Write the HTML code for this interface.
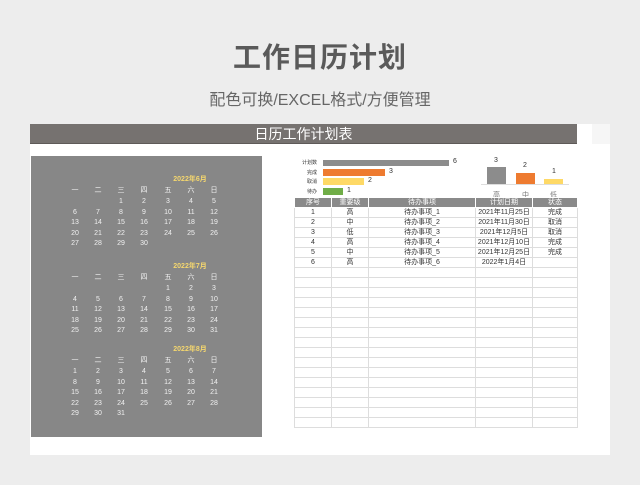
<!DOCTYPE html>
<html><head><meta charset="utf-8"><style>
*{margin:0;padding:0;box-sizing:border-box}
body{width:640px;height:485px;background:#ededed;position:relative;overflow:hidden;font-family:"Liberation Sans","Noto Sans CJK SC",sans-serif}
.a{position:absolute}
.t1{left:0;width:640px;top:36px;text-align:center;font-size:28px;font-weight:bold;color:#5a5a5a;letter-spacing:1px}
.t2{left:0;width:640px;top:86px;text-align:center;font-size:16px;color:#666}
.panel{left:30px;top:124px;width:580px;height:331px;background:#fff}
.bar{left:30px;top:124px;width:547px;height:20px;background:#767270;border-bottom:1px solid #5e5a58;color:#fff;text-align:center;font-size:14px;line-height:20px}
.side{left:592px;top:124px;width:18px;height:20px;background:#f6f6f6}
.cal{left:31px;top:156px;width:231px;height:281px;background:#878787}
.c{position:absolute;width:22px;text-align:center;font-size:7px;color:#f0f0f0;line-height:8px}
.h{position:absolute;width:60px;text-align:center;font-size:7px;color:#f5d76e;font-weight:bold}
table{position:absolute;left:294px;top:197px;border-collapse:collapse;font-size:7px;color:#333}
td{border:1px solid #ddd;height:10px;padding:0;text-align:center;line-height:8px}
th{background:#8a8a8a;color:#fff;font-weight:normal;height:10px;border:1px solid #fff;line-height:8px}
.lb{font-size:5px;color:#333;position:absolute}
.n{font-size:7px;color:#333;position:absolute}
</style></head><body>
<div class="a t1">工作日历计划</div>
<div class="a t2">配色可换/EXCEL格式/方便管理</div>
<div class="a panel"></div>
<div class="a bar">日历工作计划表</div>
<div class="a side"></div>
<div class="a cal" id="cal"></div>

<div class="lb" style="left:302px;top:159px">计划数</div>
<div class="a" style="left:323px;top:160px;width:126px;height:6px;background:#8c8c8c"></div><div class="n" style="left:453px;top:158px">6</div>
<div class="lb" style="left:307px;top:169px">完成</div>
<div class="a" style="left:323px;top:169px;width:62px;height:7px;background:#ee7b30"></div><div class="n" style="left:389px;top:168px">3</div>
<div class="lb" style="left:307px;top:178px">取消</div>
<div class="a" style="left:323px;top:178px;width:41px;height:7px;background:#fed966"></div><div class="n" style="left:368px;top:177px">2</div>
<div class="lb" style="left:307px;top:188px">待办</div>
<div class="a" style="left:323px;top:188px;width:20px;height:7px;background:#70ad47"></div><div class="n" style="left:347px;top:187px">1</div>

<div class="n" style="left:494px;top:157px">3</div>
<div class="n" style="left:523px;top:162px">2</div>
<div class="n" style="left:552px;top:168px">1</div>
<div class="a" style="left:487px;top:167px;width:19px;height:17px;background:#8c8c8c"></div>
<div class="a" style="left:516px;top:173px;width:19px;height:11px;background:#ee7b30"></div>
<div class="a" style="left:544px;top:179px;width:19px;height:5px;background:#fed966"></div>
<div class="a" style="left:481px;top:184px;width:88px;height:1px;background:#ddd"></div>
<div class="n" style="left:493px;top:190px;color:#777">高</div>
<div class="n" style="left:522px;top:190px;color:#777">中</div>
<div class="n" style="left:550px;top:190px;color:#777">低</div>

<table id="tb">
<tr><th style="width:37px">序号</th><th style="width:37px">重要级</th><th style="width:107px">待办事项</th><th style="width:57px">计划日期</th><th style="width:45px">状态</th></tr>
<tr><td>1</td><td>高</td><td>待办事项_1</td><td>2021年11月25日</td><td>完成</td></tr>
<tr><td>2</td><td>中</td><td>待办事项_2</td><td>2021年11月30日</td><td>取消</td></tr>
<tr><td>3</td><td>低</td><td>待办事项_3</td><td>2021年12月5日</td><td>取消</td></tr>
<tr><td>4</td><td>高</td><td>待办事项_4</td><td>2021年12月10日</td><td>完成</td></tr>
<tr><td>5</td><td>中</td><td>待办事项_5</td><td>2021年12月25日</td><td>完成</td></tr>
<tr><td>6</td><td>高</td><td>待办事项_6</td><td>2022年1月4日</td><td></td></tr>
</table>
<script>
var tb=document.getElementById('tb');
for(var i=0;i<16;i++){var r=tb.insertRow();for(var j=0;j<5;j++)r.insertCell();}
var cal=document.getElementById('cal');
var xs=[75,98,121,144,168,191,214];
var wd=['一','二','三','四','五','六','日'];
function m(title,ty,start,days){
 var h=document.createElement('div');h.className='h';h.style.left=(160-31)+'px';h.style.top=(ty-156-4)+'px';h.textContent=title;cal.appendChild(h);
 for(var k=0;k<7;k++){var d=document.createElement('div');d.className='c';d.style.left=(xs[k]-11-31)+'px';d.style.top=(ty+13-156-4)+'px';d.textContent=wd[k];cal.appendChild(d);}
 var col=start,row=0;
 for(var n=1;n<=days;n++){var d=document.createElement('div');d.className='c';d.style.left=(xs[col]-11-31)+'px';d.style.top=(ty+24+row*10.6-156-4)+'px';d.textContent=n;cal.appendChild(d);col++;if(col==7){col=0;row++;}}
}
m('2022年6月',178,2,30);m('2022年7月',265,4,31);m('2022年8月',348,0,31);
</script>
</body></html>
